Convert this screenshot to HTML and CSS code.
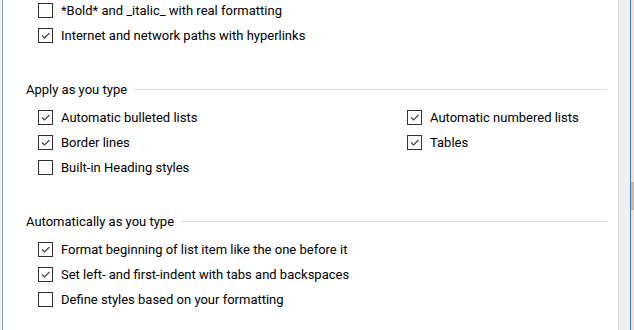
FILE: index.html
```html
<!DOCTYPE html>
<html lang="en">
<head>
    <meta charset="UTF-8">
    <title>AutoFormat</title>
    <link rel="stylesheet" href="styles.css">
</head>
<body>
    <div class="edge-left"></div>
    <div class="panel">
        <div class="group first">
            <label class="option"><span class="box"></span>*Bold* and _italic_ with real formatting</label>
            <label class="option"><span class="box checked"><svg viewBox="0 0 13 13"><path d="M3 6.5 L5.5 9 L10.5 4"/></svg></span>Internet and network paths with hyperlinks</label>
        </div>

        <div class="heading"><span>Apply as you type</span></div>
        <div class="group cols">
            <div class="col">
                <label class="option"><span class="box checked"><svg viewBox="0 0 13 13"><path d="M3 6.5 L5.5 9 L10.5 4"/></svg></span>Automatic bulleted lists</label>
                <label class="option"><span class="box checked"><svg viewBox="0 0 13 13"><path d="M3 6.5 L5.5 9 L10.5 4"/></svg></span>Border lines</label>
                <label class="option"><span class="box"></span>Built-in Heading styles</label>
            </div>
            <div class="col right">
                <label class="option"><span class="box checked"><svg viewBox="0 0 13 13"><path d="M3 6.5 L5.5 9 L10.5 4"/></svg></span>Automatic numbered lists</label>
                <label class="option"><span class="box checked"><svg viewBox="0 0 13 13"><path d="M3 6.5 L5.5 9 L10.5 4"/></svg></span>Tables</label>
            </div>
        </div>

        <div class="heading"><span>Automatically as you type</span></div>
        <div class="group">
            <label class="option"><span class="box checked"><svg viewBox="0 0 13 13"><path d="M3 6.5 L5.5 9 L10.5 4"/></svg></span>Format beginning of list item like the one before it</label>
            <label class="option"><span class="box checked"><svg viewBox="0 0 13 13"><path d="M3 6.5 L5.5 9 L10.5 4"/></svg></span>Set left- and first-indent with tabs and backspaces</label>
            <label class="option"><span class="box"></span>Define styles based on your formatting</label>
        </div>
    </div>
    <div class="edge-right">
        <div class="track"><div class="thumb"></div></div>
    </div>
</body>
</html>
```

FILE: styles.css
```css
/* Reset */
html, body {
    margin: 0;
    padding: 0;
    width: 100%;
    height: 100%;
    overflow: hidden;
}

body {
    display: flex;
    background: #f0f0f0;
    font-family: Roboto, "Noto Sans", sans-serif;
    font-size: 13px;
    color: #000;
}

/* Window edges */
.edge-left {
    width: 2px;
    background: #f0f0f0;
    border-right: 1px solid #8aa2bd;
}

.panel {
    flex: 1;
    background: #fff;
    border-right: 1px solid #d9d9d9;
    padding-left: 23px;
    padding-right: 11px;
    overflow: hidden;
}

.edge-right {
    width: 15px;
    display: flex;
    justify-content: flex-end;
}

.track {
    width: 3px;
    background: #e6e6e6;
    border-left: 1px solid #3c7fb1;
    display: flex;
    flex-direction: column;
}

.thumb {
    margin-top: 182px;
    height: 28px;
    background: #bdbdbd;
}

/* Groups */
.group {
    padding-left: 12px;
}

.group.first {
    margin-top: -2px;
}

.cols {
    display: flex;
}

.col {
    display: flex;
    flex-direction: column;
}

.col.right {
    margin-left: auto;
    width: 200px;
}

.option {
    display: flex;
    align-items: center;
    height: 25px;
    white-space: nowrap;
}

.box {
    width: 13px;
    height: 13px;
    border: 1px solid #333;
    margin-right: 8px;
    flex-shrink: 0;
    display: flex;
}

.box svg {
    width: 13px;
    height: 13px;
}

.box path {
    fill: none;
    stroke: #444;
    stroke-width: 1.2;
}

/* Section headings */
.heading {
    display: flex;
    align-items: center;
    height: 20px;
    margin-top: 31px;
    margin-bottom: 6px;
}

.heading::after {
    content: "";
    flex: 1;
    height: 1px;
    background: #dcdcdc;
    margin-left: 7px;
}
```
